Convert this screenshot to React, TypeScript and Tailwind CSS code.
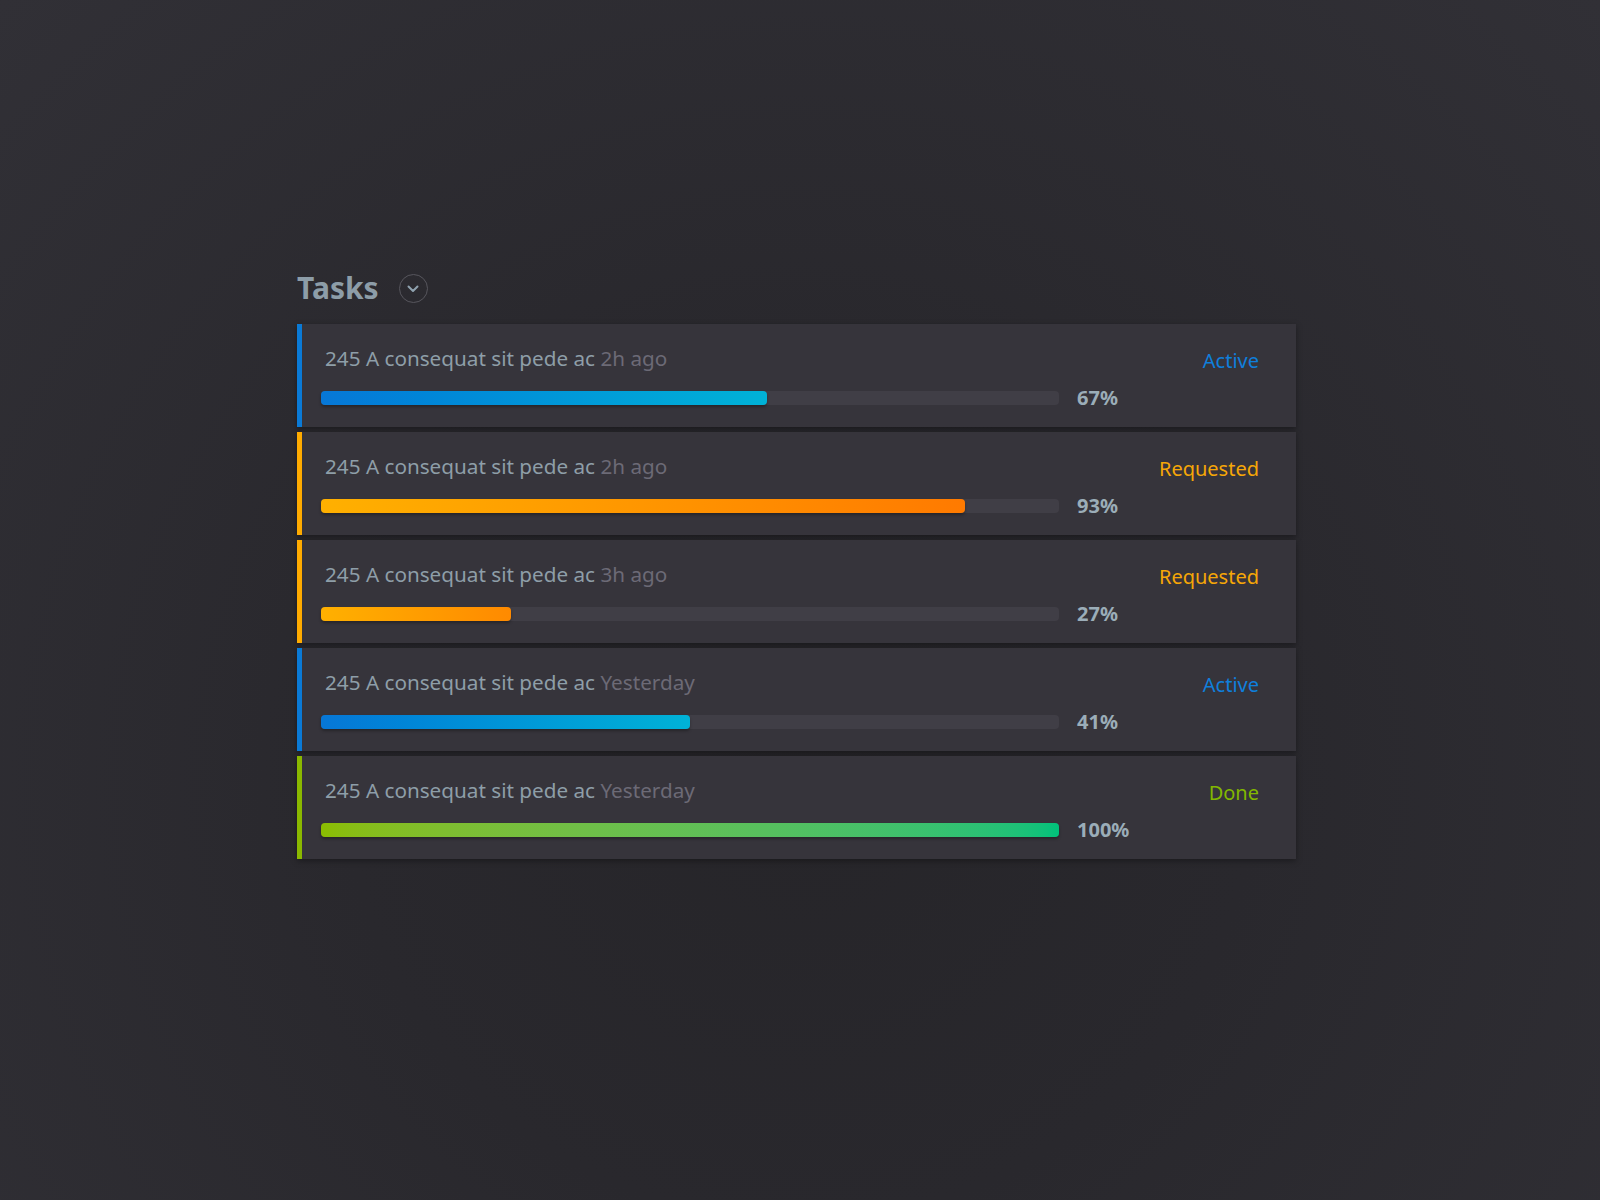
import React from "react";

type Task = {
  time: string;
  pct: string;
  fill: number;
  status: string;
  statusClass: string;
  borderClass: string;
  gradClass: string;
};

const tasks: Task[] = [
  { time: "2h ago", pct: "67%", fill: 446, status: "Active", statusClass: "text-[#0f7fdb]", borderClass: "border-[#0a7ad6]", gradClass: "bg-gradient-to-r from-[#0777d7] to-[#00b2d7]" },
  { time: "2h ago", pct: "93%", fill: 644, status: "Requested", statusClass: "text-[#f6a707]", borderClass: "border-[#ffab00]", gradClass: "bg-gradient-to-r from-[#ffb000] to-[#ff7a00]" },
  { time: "3h ago", pct: "27%", fill: 190, status: "Requested", statusClass: "text-[#f6a707]", borderClass: "border-[#ffab00]", gradClass: "bg-gradient-to-r from-[#ffb000] to-[#ff8a00]" },
  { time: "Yesterday", pct: "41%", fill: 369, status: "Active", statusClass: "text-[#0f7fdb]", borderClass: "border-[#0a7ad6]", gradClass: "bg-gradient-to-r from-[#0777d7] to-[#00b2d7]" },
  { time: "Yesterday", pct: "100%", fill: 738, status: "Done", statusClass: "text-[#82b800]", borderClass: "border-[#8ab800]", gradClass: "bg-gradient-to-r from-[#8bbd00] to-[#00c17b]" },
];

function TaskCard({ t }: { t: Task }) {
  return (
    <div className={`flex bg-[#36343b] border-l-[5px] ${t.borderClass} pl-[19px] pr-[37px] pt-[20px] pb-[15px] shadow-[0_2px_6px_rgba(0,0,0,0.35)]`}>
      <div className="flex-1 flex flex-col">
        <div className="ml-[4px] text-[20.7px] leading-[28px] text-[#8e9ea8]">
          245 A consequat sit pede ac <span className="text-[#6c6a76]">{t.time}</span>
        </div>
        <div className="mt-[12px] flex items-center h-[28px]">
          <div className="w-[738px] h-[14px] rounded-[4px] bg-[#403e46]">
            <div
              className={`h-full rounded-[4px] ${t.gradClass} shadow-[0_2px_3px_rgba(0,0,0,0.3)]`}
              style={{ width: `${t.fill}px` }}
            />
          </div>
          <div className="ml-[18px] text-[20px] leading-[28px] font-bold text-[#9badb8]">{t.pct}</div>
        </div>
      </div>
      <div className={`mt-[3px] text-[20px] leading-[28px] ${t.statusClass}`}>{t.status}</div>
    </div>
  );
}

export default function App() {
  return (
    <div
      className="w-[1600px] h-[1200px] overflow-hidden bg-[radial-gradient(ellipse_at_50%_65%,#262529_0%,#29282d_40%,#313036_100%)] pt-[272px] pl-[297px]"
      style={{ fontFamily: "'Noto Sans', Lato, sans-serif" }}
    >
      <div className="w-[999px]">
        <div className="flex items-center h-[32px] mb-[20px]">
          <div className="text-[30px] leading-[32px] font-bold text-[#8d9da8]">Tasks</div>
          <div className="ml-[20px] w-[29px] h-[29px] rounded-full border border-[#57565d] flex items-center justify-center mt-[1px]">
            <svg width="12" height="8" viewBox="0 0 12 8" fill="none">
              <polyline points="1.5,1.5 6,6 10.5,1.5" stroke="#8fa2af" strokeWidth="2" strokeLinecap="round" strokeLinejoin="round" />
            </svg>
          </div>
        </div>
        <div className="flex flex-col gap-[5px]">
          {tasks.map((t, i) => (
            <TaskCard key={i} t={t} />
          ))}
        </div>
      </div>
    </div>
  );
}
